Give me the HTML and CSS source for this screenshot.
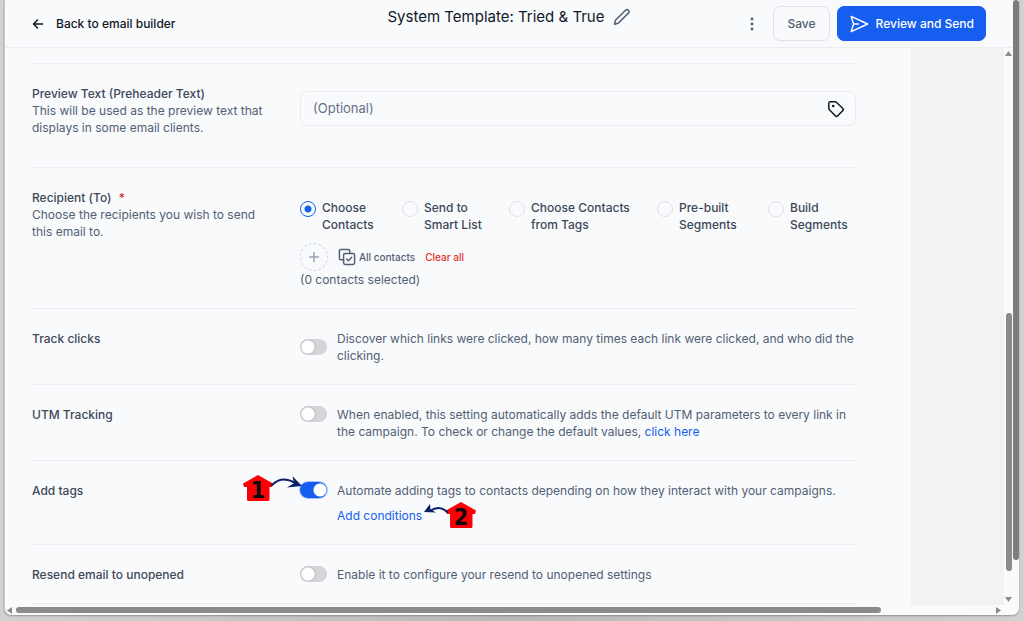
FILE: index.html
```html
<!DOCTYPE html>
<html lang="en">
<head>
  <meta charset="UTF-8"/>
  <meta name="viewport" content="width=device-width, initial-scale=1.0"/>
  <title>System Template: Tried &amp; True</title>
  <link rel="stylesheet" href="styles.css">
</head>
<body>
  <div class="window">
    <div class="app">
      <header class="header">
        <button class="back" type="button">
          <svg width="12" height="12" viewBox="0 0 12 12"><path d="M10.5 6H1.5M5.5 2 1.5 6l4 4"/></svg>
          Back to email builder
        </button>
        <div class="title">
          <h1>System Template: Tried &amp; True</h1>
          <button class="icon-button" type="button" aria-label="Edit name">
            <svg width="18" height="18" viewBox="0 0 18 18"><path d="M2.400 12.300 12.600 2.300a1.900 1.900 0 0 1 2.800 2.800L5.200 15.300l-3.600.9z"/></svg>
          </button>
        </div>
        <div class="actions">
          <button class="icon-button dots" type="button" aria-label="More">
            <svg width="6" height="14" viewBox="0 0 6 14"><circle cx="3" cy="2" r="1.4"/><circle cx="3" cy="7" r="1.4"/><circle cx="3" cy="12" r="1.4"/></svg>
          </button>
          <button class="btn" type="button">Save</button>
          <button class="btn primary" type="button">
            <svg width="20" height="20" viewBox="0 0 20 20"><path d="M4.5 10 2.2 2.4 18.6 10 2.2 17.6zM4.5 10h5"/></svg>
            Review and Send
          </button>
        </div>
      </header>

      <div class="body">
        <main class="settings">
          <section class="row">
            <div class="label">
              <label for="preview">Preview Text (Preheader Text)</label>
              <p>This will be used as the preview text that displays in some email clients.</p>
            </div>
            <div class="control preview">
              <div class="field">
                <input type="text" id="preview" placeholder="(Optional)"/>
                <button class="icon-button tag" type="button" aria-label="Insert tag">
                  <svg width="18" height="18" viewBox="0 0 18 18"><path d="M1.8 3.3a1.5 1.5 0 0 1 1.5-1.5h4.9a1.5 1.5 0 0 1 1.1.4l6.4 6.1a1.8 1.8 0 0 1 0 2.5l-5 5a1.8 1.8 0 0 1-2.5 0L2.2 9.6a1.5 1.5 0 0 1-.4-1.1z"/><circle cx="6.2" cy="6" r=".6"/></svg>
                </button>
              </div>
            </div>
          </section>

          <section class="row">
            <div class="label">
              <h2>Recipient (To) <span class="required">*</span></h2>
              <p>Choose the recipients you wish to send this email to.</p>
            </div>
            <div class="control recipients">
              <div class="radios">
                <label><input type="radio" name="to" checked/><span>Choose<br/>Contacts</span></label>
                <label><input type="radio" name="to"/><span>Send to<br/>Smart List</span></label>
                <label><input type="radio" name="to"/><span>Choose Contacts<br/>from Tags</span></label>
                <label><input type="radio" name="to"/><span>Pre-built<br/>Segments</span></label>
                <label><input type="radio" name="to"/><span>Build<br/>Segments</span></label>
              </div>
              <div class="contacts">
                <button class="add" type="button" aria-label="Add contact">
                  <svg width="10" height="10" viewBox="0 0 10 10"><path d="M5 .5v9M.5 5h9"/></svg>
                </button>
                <button class="all" type="button">
                  <svg width="18" height="18" viewBox="0 0 18 18"><path d="M5 11.8H3a1.6 1.6 0 0 1-1.6-1.6V3A1.6 1.6 0 0 1 3 1.4h7.2A1.6 1.6 0 0 1 11.800 3v2"/><rect x="5.600" y="5.400" width="11" height="11" rx="1.600"/><path d="m8.600 11 1.800 1.700 3.300-3.400"/></svg>
                  All contacts
                </button>
                <button class="clear" type="button">Clear all</button>
              </div>
              <p>(0 contacts selected)</p>
            </div>
          </section>

          <section class="row">
            <div class="label"><label for="clicks">Track clicks</label></div>
            <div class="control option centered">
              <input class="toggle" type="checkbox" id="clicks"/>
              <p>Discover which links were clicked, how many times each link were clicked, and who did the clicking.</p>
            </div>
          </section>

          <section class="row">
            <div class="label"><label for="utm">UTM Tracking</label></div>
            <div class="control option">
              <input class="toggle" type="checkbox" id="utm"/>
              <p>When enabled, this setting automatically adds the default UTM parameters to every link in the campaign. To check or change the default values, <a href="#">click here</a></p>
            </div>
          </section>

          <section class="row">
            <div class="label"><label for="tags">Add tags</label></div>
            <div class="control option">
              <input class="toggle" type="checkbox" id="tags" checked/>
              <svg class="step step-one" width="62" height="32" viewBox="0 0 62 32">
                <path class="house" d="M16 2 31 10.500 30 14h-2.500v12.500a1.500 1.500 0 0 1-1.500 1.500H6.500A1.500 1.500 0 0 1 5 26.500V14H2L1 10.500z"/>
                <text x="16" y="25">1</text>
                <path class="curve" d="M30 12c7-7 15-7 23-2"/>
                <path class="head" d="M60 13 45 14.500l7-4.200-1.500-7z"/>
              </svg>
              <div>
                <p>Automate adding tags to contacts depending on how they interact with your campaigns.</p>
                <div class="conditions">
                  <button class="link" type="button">Add conditions</button>
                  <svg class="step step-two" width="54" height="32" viewBox="0 0 54 32">
                    <path class="house" d="M37 2 52 10.500 51 14h-2.500v12.500a1.500 1.500 0 0 1-1.500 1.500H27.500a1.500 1.500 0 0 1-1.500-1.500V14H23L22 10.500z"/>
                    <text x="37" y="25">2</text>
                    <path class="curve" d="M23 12c-5-5-11-5-17-1"/>
                    <path class="head" d="m0 12 6-8 .5 5.500 5.500 3z"/>
                  </svg>
                </div>
              </div>
            </div>
          </section>

          <section class="row">
            <div class="label"><label for="resend">Resend email to unopened</label></div>
            <div class="control option">
              <input class="toggle" type="checkbox" id="resend"/>
              <p>Enable it to configure your resend to unopened settings</p>
            </div>
          </section>
        </main>
        <aside class="side"></aside>
        <div class="scroll-y">
          <svg width="7" height="5" viewBox="0 0 7 5"><path d="M3.500 0 7 5H0z"/></svg>
          <div class="track-y"><div class="thumb-y"></div></div>
          <svg width="7" height="5" viewBox="0 0 7 5"><path d="M3.500 5 0 0h7z"/></svg>
        </div>
      </div>

      <div class="scroll-x">
        <svg width="5" height="7" viewBox="0 0 5 7"><path d="M0 3.500 5 0v7z"/></svg>
        <div class="track-x"><div class="thumb-x"></div></div>
        <svg width="5" height="7" viewBox="0 0 5 7"><path d="M5 3.500 0 0v7z"/></svg>
      </div>
    </div>
    <div class="outer-scroll"><div class="outer-thumb"></div></div>
  </div>
</body>
</html>
```
FILE: styles.css
```css
:root {
  --bg: #f9fafc;
  --line: #eaecf0;
  --text: #516073;
  --heading: #3d4859;
  --blue: #155eef;
  --thumb: #8b8b8b;
}

* {
  box-sizing: border-box;
}

body {
  margin: 0;
  padding: 0 5px 6px 4px;
  height: 100vh;
  overflow: hidden;
  background: linear-gradient(90deg, #d2d2d3, #b9b9b9 50%, #d2d2d3);
  font-family: Inter, "Liberation Sans", sans-serif;
  font-size: 12px;
  line-height: 17px;
  color: var(--text);
}

h1, h2, p {
  margin: 0;
  font-size: inherit;
  font-weight: inherit;
}

button {
  padding: 0;
  border: none;
  background: none;
  font: inherit;
  color: inherit;
  cursor: pointer;
}

svg {
  display: block;
  flex: none;
  fill: none;
  stroke: currentColor;
  stroke-width: 1.5;
  stroke-linecap: round;
  stroke-linejoin: round;
}

.window {
  display: flex;
  height: 100%;
  overflow: hidden;
  background: var(--bg);
  border-left: 1px solid #c4c4c5;
  border-radius: 0 0 7px 7px;
  box-shadow: 0 1px 2px rgba(0, 0, 0, 0.3);
}

.app {
  flex: 1;
  min-width: 0;
  display: flex;
  flex-direction: column;
}

/* header */
.header {
  display: grid;
  grid-template-columns: 1fr auto 1fr;
  align-items: center;
  height: 48px;
  padding: 0 27px;
  border-bottom: 1px solid var(--line);
  color: #101828;
}

.back {
  display: flex;
  align-items: center;
  gap: 12px;
  font-weight: 500;
}

.title {
  display: flex;
  align-items: center;
  gap: 8px;
  align-self: start;
  padding-top: 7px;
}

.title h1 {
  font-size: 15px;
  line-height: 20px;
}

.icon-button {
  color: var(--text);
}

.actions {
  display: flex;
  align-items: center;
  justify-content: flex-end;
  gap: 7px;
}

.dots {
  margin-right: 11px;
}

.dots svg {
  fill: currentColor;
  stroke: none;
}

.btn {
  display: flex;
  align-items: center;
  gap: 7px;
  height: 35px;
  padding: 0 13px;
  border: 1px solid #dfe1e6;
  border-radius: 7px;
  font-weight: 500;
  color: var(--text);
}

.btn.primary {
  padding: 0 11px;
  border-color: var(--blue);
  background: var(--blue);
  color: #fff;
}

/* page body */
.body {
  flex: 1;
  min-height: 0;
  display: flex;
}

.settings {
  flex: 1;
  padding: 15px 55px 0 27px;
  overflow: hidden;
}

.side {
  width: 93px;
  background: #f1f2f4;
}

.row {
  display: flex;
  padding: 21px 0 20px;
  border-top: 1px solid var(--line);
}

.row:last-child {
  border-bottom: 1px solid var(--line);
}

.label {
  width: 268px;
  padding-right: 30px;
}

.label h2, .label > label {
  display: block;
  font-weight: 500;
  color: var(--heading);
}

.required {
  margin-left: 4px;
  color: #d92d20;
}

.control {
  flex: 1;
}

.preview {
  padding: 6px 0 21px;
}

.field {
  display: flex;
  align-items: center;
  height: 35px;
  padding: 0 10px 0 12px;
  border: 1px solid var(--line);
  border-radius: 7px;
}

.field input {
  flex: 1;
  border: none;
  outline: none;
  padding: 0;
  background: none;
  font: inherit;
  font-size: 13px;
  color: inherit;
}

.field input::placeholder {
  color: #667085;
}

.tag {
  color: #101828;
}

/* recipients */
.recipients {
  padding: 10px 0 0;
}

.radios {
  display: grid;
  grid-template-columns: 102fr 107fr 148fr 111fr 88fr;
  font-weight: 500;
  color: var(--heading);
}

.radios label {
  display: flex;
  align-items: flex-start;
  gap: 6px;
  white-space: nowrap;
}

.radios input {
  appearance: none;
  flex: none;
  width: 16px;
  height: 16px;
  margin: 2px 0 0;
  border: 1px solid #dfe1e5;
  border-radius: 50%;
}

.radios input:checked {
  border-color: var(--blue);
  background: radial-gradient(circle, var(--blue) 3px, transparent 4px);
}

.contacts {
  display: flex;
  align-items: center;
  margin-top: 10px;
  font-size: 10px;
  font-weight: 500;
}

.add {
  display: grid;
  place-items: center;
  width: 28px;
  height: 28px;
  border: 1px dashed #d0d5dd;
  border-radius: 50%;
  color: #98a2b3;
}

.all {
  display: flex;
  align-items: center;
  gap: 3px;
  margin: 0 10px;
}

.clear {
  color: #e0342a;
}

/* options with a switch */
.option {
  position: relative;
  display: flex;
  gap: 10px;
}

.centered {
  align-items: center;
}

.toggle {
  appearance: none;
  flex: none;
  width: 27px;
  height: 16px;
  margin: 0;
  border-radius: 8px;
  background: radial-gradient(circle at 8px 50%, #fff 6px, #c4c6ca 7px, #d3d5d9 9px);
}

.toggle:checked {
  background: radial-gradient(circle at 20px 50%, #fff 6px, var(--blue) 7px);
  box-shadow: 0 0 0 1px #a9c4fb;
}

.option a, .link {
  color: #155eef;
  text-decoration: none;
}

.conditions {
  position: relative;
  width: fit-content;
  margin-top: 8px;
}

.link {
  display: block;
  padding-right: 2px;
}

/* numbered step markers */
.step {
  position: absolute;
  stroke: none;
}

.step-one {
  left: -58px;
  top: -9px;
}

.step-two {
  left: 100%;
  top: -7px;
}

.step .house {
  fill: #fb0007;
}

.step text {
  fill: #0a0a0a;
  font-family: "DejaVu Sans Condensed", "DejaVu Sans", sans-serif;
  font-size: 23px;
  font-weight: 700;
  text-anchor: middle;
}

.step .curve {
  stroke: #0b1f66;
  stroke-width: 2;
}

.step .head {
  fill: #0b1f66;
}

/* scrollbars */
.scroll-y {
  display: flex;
  flex-direction: column;
  align-items: center;
  gap: 4px;
  width: 9px;
  padding: 3px 0;
}

.scroll-y svg, .scroll-x svg {
  fill: var(--thumb);
  stroke: none;
}

.track-y {
  flex: 1;
  width: 6px;
  padding-top: 253px;
}

.thumb-y {
  height: 92%;
  border-radius: 3px;
  background: var(--thumb);
}

.scroll-x {
  display: flex;
  align-items: center;
  gap: 4px;
  height: 10px;
  padding: 0 12px 0 2px;
}

.track-x {
  flex: 1;
  padding-right: 4px;
}

.thumb-x {
  width: 89%;
  height: 6px;
  border-radius: 3px;
  background: var(--thumb);
}

.outer-scroll {
  width: 6px;
}

.outer-thumb {
  height: 91%;
  border-radius: 3px;
  background: #7c7d80;
}
```
